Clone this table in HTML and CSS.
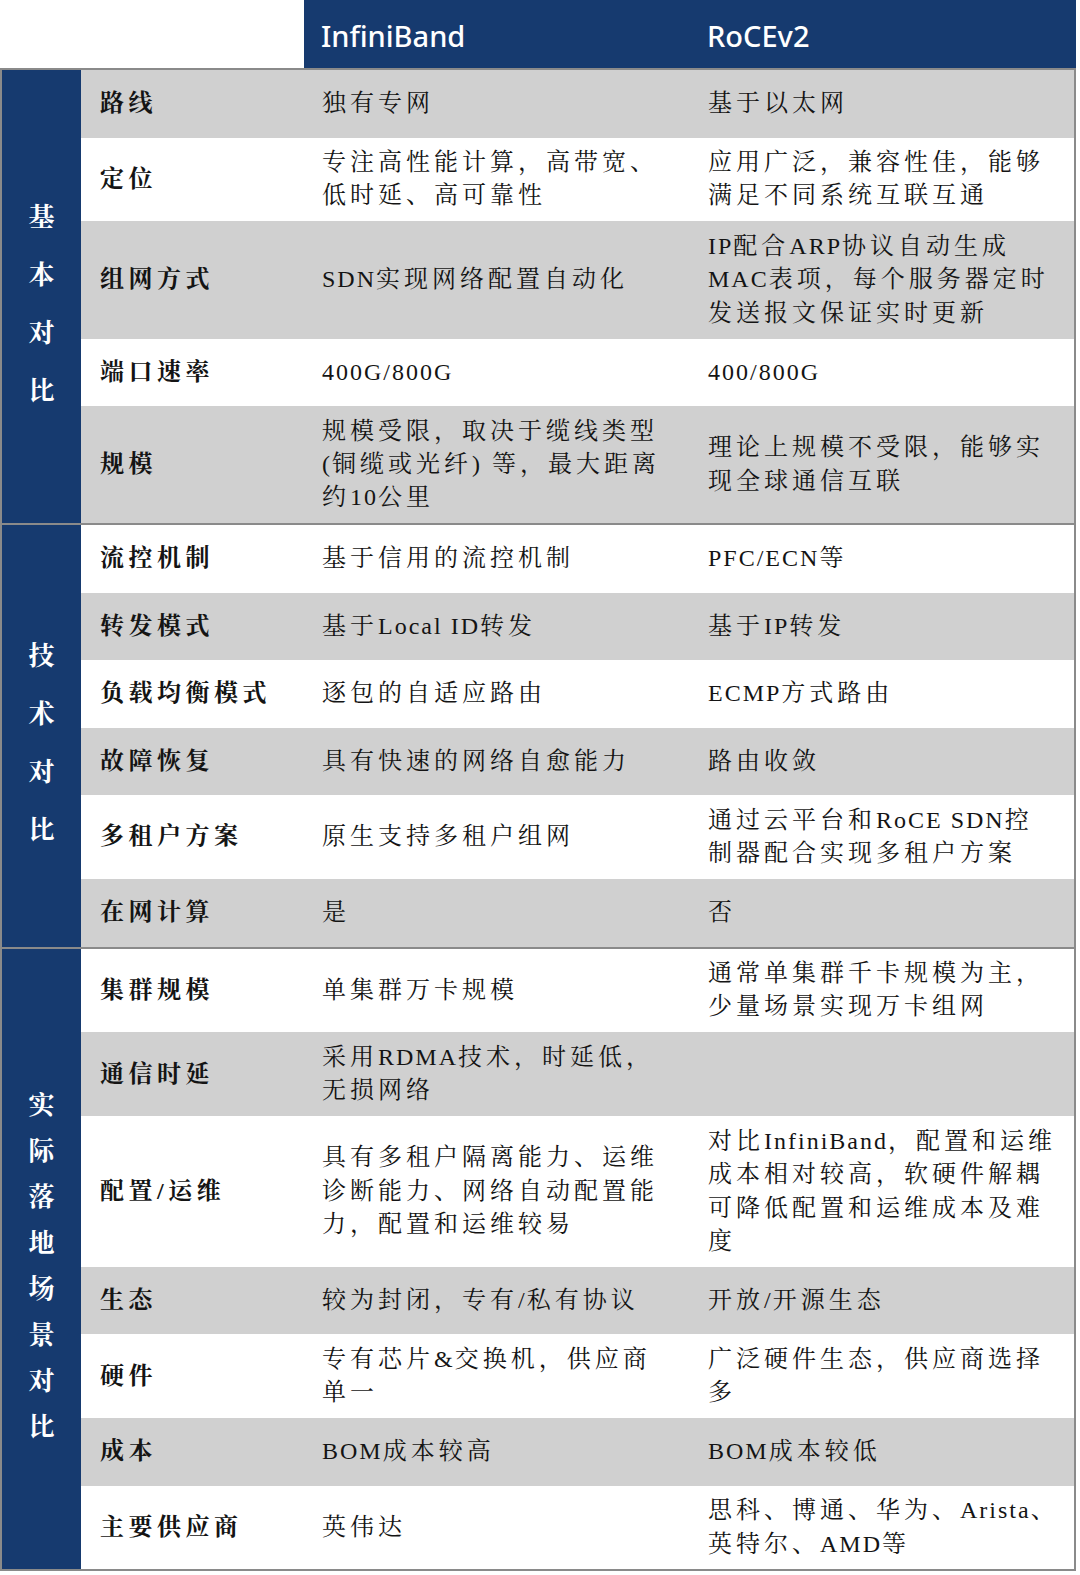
FILE: index.html
```html
<!DOCTYPE html>
<html lang="zh-CN">
<head>
<meta charset="utf-8">
<title>InfiniBand vs RoCEv2</title>
<link rel="stylesheet" href="styles.css">
</head>
<body>
<div class="sheet">
  <div class="head">
    <div class="head-blank"></div>
    <div class="head-cell head-ib">InfiniBand</div>
    <div class="head-cell head-roce">RoCEv2</div>
  </div>

  <div class="group">
    <div class="side"><span>基</span><span>本</span><span>对</span><span>比</span></div>
    <div class="rows">
      <div class="row g"><div class="cell label">路线</div><div class="cell">独有专网</div><div class="cell">基于以太网</div></div>
      <div class="row"><div class="cell label">定位</div><div class="cell">专注高性能计算，高带宽、<br>低时延、高可靠性</div><div class="cell">应用广泛，兼容性佳，能够<br>满足不同系统互联互通</div></div>
      <div class="row g"><div class="cell label">组网方式</div><div class="cell"><span class="lt">SDN</span>实现网络配置自动化</div><div class="cell"><span class="lt">IP</span>配合<span class="lt">ARP</span>协议自动生成<br><span class="lt">MAC</span>表项，每个服务器定时<br>发送报文保证实时更新</div></div>
      <div class="row"><div class="cell label">端口速率</div><div class="cell"><span class="lt">400G/800G</span></div><div class="cell"><span class="lt">400/800G</span></div></div>
      <div class="row g"><div class="cell label">规模</div><div class="cell">规模受限，取决于缆线类型<br><span class="lt">(</span>铜缆或光纤<span class="lt">)</span> 等，最大距离<br>约<span class="lt">10</span>公里</div><div class="cell">理论上规模不受限，能够实<br>现全球通信互联</div></div>
    </div>
  </div>

  <div class="group">
    <div class="side"><span>技</span><span>术</span><span>对</span><span>比</span></div>
    <div class="rows">
      <div class="row"><div class="cell label">流控机制</div><div class="cell">基于信用的流控机制</div><div class="cell"><span class="lt">PFC/ECN</span>等</div></div>
      <div class="row g"><div class="cell label">转发模式</div><div class="cell">基于<span class="lt">Local ID</span>转发</div><div class="cell">基于<span class="lt">IP</span>转发</div></div>
      <div class="row"><div class="cell label">负载均衡模式</div><div class="cell">逐包的自适应路由</div><div class="cell"><span class="lt">ECMP</span>方式路由</div></div>
      <div class="row g"><div class="cell label">故障恢复</div><div class="cell">具有快速的网络自愈能力</div><div class="cell">路由收敛</div></div>
      <div class="row"><div class="cell label">多租户方案</div><div class="cell">原生支持多租户组网</div><div class="cell">通过云平台和<span class="lt">RoCE SDN</span>控<br>制器配合实现多租户方案</div></div>
      <div class="row g"><div class="cell label">在网计算</div><div class="cell">是</div><div class="cell">否</div></div>
    </div>
  </div>

  <div class="group last">
    <div class="side tight"><span>实</span><span>际</span><span>落</span><span>地</span><span>场</span><span>景</span><span>对</span><span>比</span></div>
    <div class="rows">
      <div class="row"><div class="cell label">集群规模</div><div class="cell">单集群万卡规模</div><div class="cell">通常单集群千卡规模为主，<br>少量场景实现万卡组网</div></div>
      <div class="row g"><div class="cell label">通信时延</div><div class="cell">采用<span class="lt">RDMA</span>技术，时延低，<br>无损网络</div><div class="cell"></div></div>
      <div class="row"><div class="cell label">配置/运维</div><div class="cell">具有多租户隔离能力、运维<br>诊断能力、网络自动配置能<br>力，配置和运维较易</div><div class="cell">对比<span class="lt">InfiniBand</span>，配置和运维<br>成本相对较高，软硬件解耦<br>可降低配置和运维成本及难<br>度</div></div>
      <div class="row g"><div class="cell label">生态</div><div class="cell">较为封闭，专有<span class="lt">/</span>私有协议</div><div class="cell">开放<span class="lt">/</span>开源生态</div></div>
      <div class="row"><div class="cell label">硬件</div><div class="cell">专有芯片<span class="lt">&amp;</span>交换机，供应商<br>单一</div><div class="cell">广泛硬件生态，供应商选择<br>多</div></div>
      <div class="row g"><div class="cell label">成本</div><div class="cell"><span class="lt">BOM</span>成本较高</div><div class="cell"><span class="lt">BOM</span>成本较低</div></div>
      <div class="row"><div class="cell label">主要供应商</div><div class="cell">英伟达</div><div class="cell">思科、博通、华为、<span class="lt">Arista</span>、<br>英特尔、<span class="lt">AMD</span>等</div></div>
    </div>
  </div>
</div>
</body>
</html>
```

FILE: styles.css
```css
body {
  margin: 0;
  background: #ffffff;
  color: #141414;
  font-family: "Liberation Serif", "Noto Serif CJK SC", "Noto Sans CJK SC", serif;
}

.sheet {
  width: 1076px;
}

.head {
  display: flex;
  height: 68px;
}

.head-blank {
  width: 304px;
}

.head-cell {
  background: #163a6f;
  color: #ffffff;
  font-family: "Noto Sans", "Open Sans", sans-serif;
  font-size: 29px;
  font-weight: 500;
  display: flex;
  align-items: center;
  padding-left: 17px;
  padding-top: 2px;
  box-sizing: border-box;
}

.head-ib {
  width: 386px;
}

.head-roce {
  flex: 1;
}

.group {
  display: flex;
  border: 2px solid #8a8a8a;
  border-bottom: none;
}

.group.last {
  border-bottom: 2px solid #8a8a8a;
}

.side {
  width: 79px;
  flex: none;
  background: #163a6f;
  color: #ffffff;
  display: flex;
  flex-direction: column;
  align-items: center;
  justify-content: center;
  padding-top: 16px;
  box-sizing: border-box;
  font-size: 26px;
  font-weight: 700;
}

.side span {
  line-height: 58px;
}

.side.tight span {
  line-height: 46px;
}

.rows {
  flex: 1;
}

.row {
  display: grid;
  grid-template-columns: 223px 386px 1fr;
  align-items: center;
  min-height: 67.5px;
  background: #ffffff;
}

.row.g {
  background: #d0d0d0;
}

.cell {
  padding: 8.5px 0 8.5px 18px;
  font-size: 24px;
  line-height: 33.4px;
  letter-spacing: 4px;
  white-space: nowrap;
}

.cell.label {
  padding-left: 19px;
  font-weight: 700;
  letter-spacing: 4.5px;
}

.lt {
  letter-spacing: 2px;
}
```
